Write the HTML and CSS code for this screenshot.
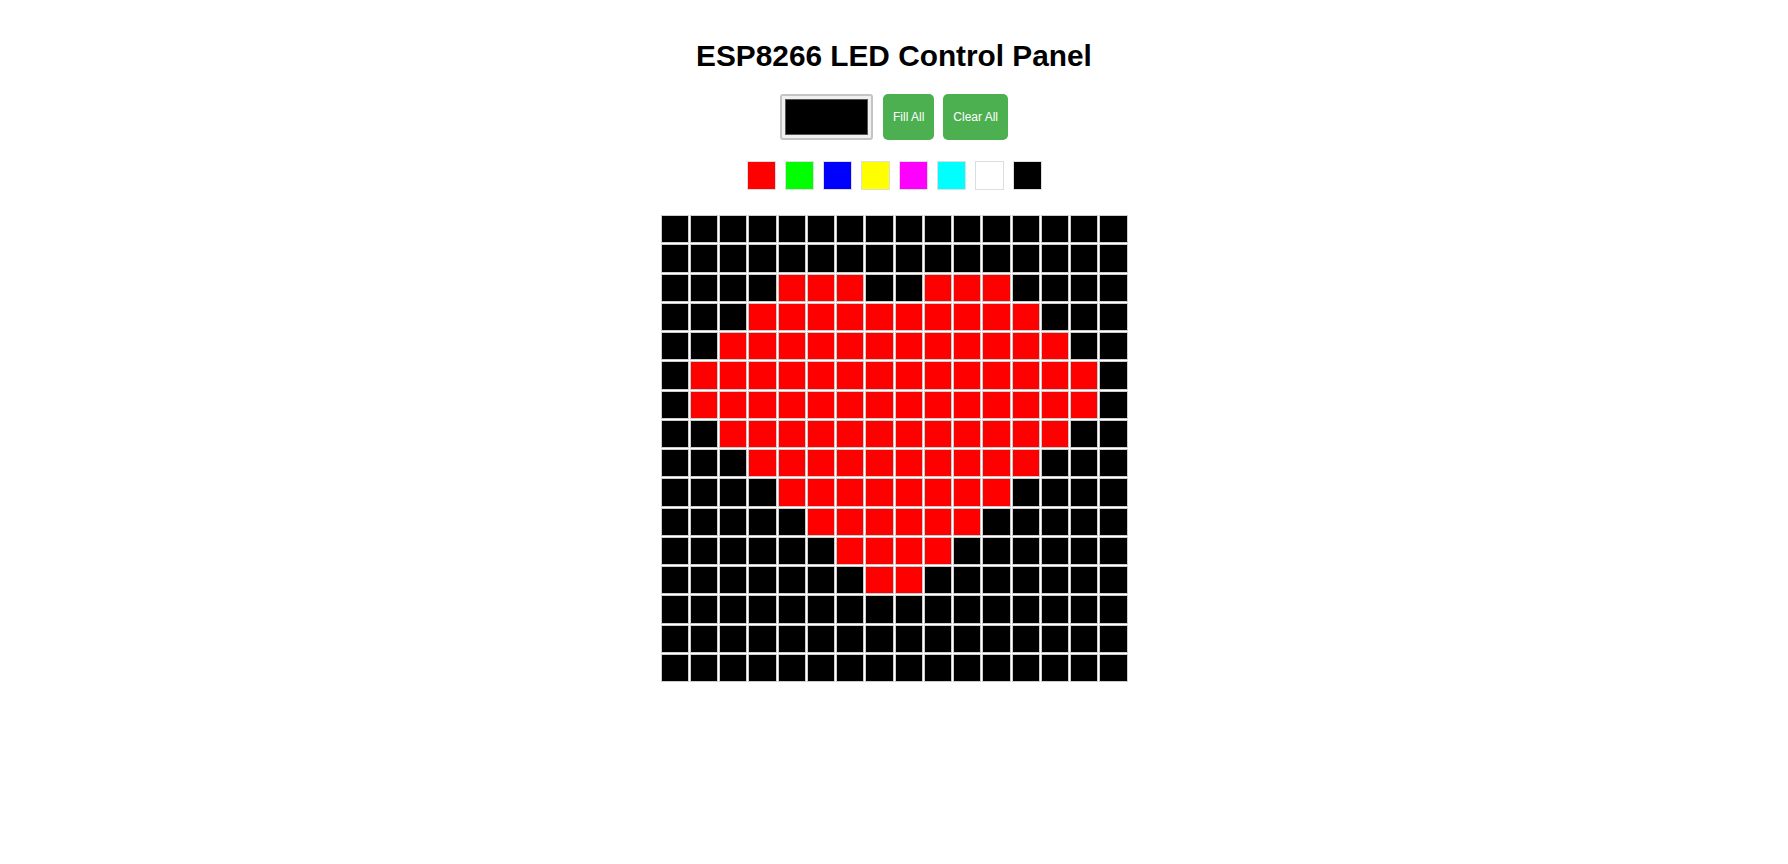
FILE: index.html
```html
<!DOCTYPE html>
<html lang="en">
<head>
    <meta charset="UTF-8">
    <meta name="viewport" content="width=device-width, initial-scale=1.0">
    <title>ESP8266 LED Control Panel</title>
    <link rel="stylesheet" href="styles.css">
</head>
<body>
    <div class="container">
        <h1>ESP8266 LED Control Panel</h1>
        <div class="controls">
            <input type="color" id="colorPicker" value="#000000">
            <button id="fillButton">Fill All</button>
            <button id="clearButton">Clear All</button>
        </div>
        <div class="palette" id="palette">
            <div class="swatch red" data-color="#ff0000"></div>
            <div class="swatch green" data-color="#00ff00"></div>
            <div class="swatch blue" data-color="#0000ff"></div>
            <div class="swatch yellow" data-color="#ffff00"></div>
            <div class="swatch magenta" data-color="#ff00ff"></div>
            <div class="swatch cyan" data-color="#00ffff"></div>
            <div class="swatch white" data-color="#ffffff"></div>
            <div class="swatch black" data-color="#000000"></div>
        </div>
        <div class="grid" id="ledGrid"></div>
    </div>

    <script>
        const SIZE = 16;
        const grid = document.getElementById('ledGrid');
        const colorPicker = document.getElementById('colorPicker');
        const fillButton = document.getElementById('fillButton');
        const clearButton = document.getElementById('clearButton');
        const palette = document.getElementById('palette');

        // heart: [row, firstCol, lastCol]
        const heart = [
            [2, 4, 6], [2, 9, 11],
            [3, 3, 12], [4, 2, 13], [5, 1, 14], [6, 1, 14],
            [7, 2, 13], [8, 3, 12], [9, 4, 11], [10, 5, 10],
            [11, 6, 9], [12, 7, 8]
        ];

        const pixels = [];

        for (let i = 0; i < SIZE * SIZE; i++) {
            const pixel = document.createElement('div');
            pixel.className = 'pixel';
            pixel.addEventListener('click', () => {
                pixel.style.backgroundColor = colorPicker.value;
            });
            grid.appendChild(pixel);
            pixels.push(pixel);
        }

        heart.forEach(([row, from, to]) => {
            for (let col = from; col <= to; col++) {
                pixels[row * SIZE + col].style.backgroundColor = '#ff0000';
            }
        });

        palette.addEventListener('click', (e) => {
            if (e.target.dataset.color) {
                colorPicker.value = e.target.dataset.color;
            }
        });

        fillButton.addEventListener('click', () => {
            pixels.forEach(p => p.style.backgroundColor = colorPicker.value);
        });

        clearButton.addEventListener('click', () => {
            pixels.forEach(p => p.style.backgroundColor = '#000000');
        });
    </script>
</body>
</html>
```

FILE: styles.css
```css
body {
    font-family: "Liberation Sans", Arial, sans-serif;
    margin: 0;
    background-color: #fff;
    color: #000;
}
.container {
    display: flex;
    flex-direction: column;
    align-items: center;
    padding-top: 39px;
}
h1 {
    font-size: 29.8px;
    margin: 0 0 20px 0;
}
.controls {
    display: flex;
    gap: 9px;
    height: 46px;
    margin-top: 1px;
}
#colorPicker {
    width: 93px;
    height: 46px;
    padding: 3px;
    margin: 0 1px 0 0;
    border: 2px solid #c4c4c4;
    border-radius: 3px;
    background-color: #f0f0f0;
    box-sizing: border-box;
    cursor: pointer;
}
#colorPicker::-webkit-color-swatch-wrapper {
    padding: 0;
}
#colorPicker::-webkit-color-swatch {
    border: 1px solid #555;
    border-radius: 0;
}
.controls button {
    font-family: inherit;
    font-size: 12px;
    padding: 0 10px;
    background-color: #4CAF50;
    color: white;
    border: none;
    border-radius: 5px;
    cursor: pointer;
}
.controls button:hover {
    background-color: #45a049;
}
.palette {
    display: flex;
    gap: 9px;
    margin-top: 21px;
}
.swatch {
    width: 29px;
    height: 29px;
    box-sizing: border-box;
    border: 1px solid #ddd;
    cursor: pointer;
}
.red { background-color: #ff0000; }
.green { background-color: #00ff00; }
.blue { background-color: #0000ff; }
.yellow { background-color: #ffff00; }
.magenta { background-color: #ff00ff; }
.cyan { background-color: #00ffff; }
.white { background-color: #ffffff; }
.black { background-color: #000000; }
.grid {
    display: grid;
    grid-template-columns: repeat(16, 1fr);
    gap: 1px;
    width: 467px;
    margin-top: 25px;
}
.pixel {
    aspect-ratio: 1;
    box-sizing: border-box;
    border: 1px solid #ccc;
    background-color: #000;
    cursor: pointer;
}
```
